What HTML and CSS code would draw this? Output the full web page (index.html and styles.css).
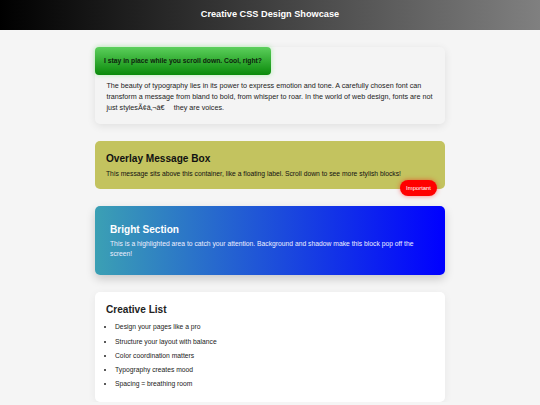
FILE: index.html
```html
<!DOCTYPE html>
<html lang="en">
<head>
<meta charset="utf-8">
<title>Creative CSS Design Showcase</title>
<link rel="stylesheet" href="styles.css">
</head>
<body>
<header class="site-header">
  <h1 class="site-title">Creative CSS Design Showcase</h1>
</header>
<main class="container">
  <section class="card intro">
    <div class="sticky-note">I stay in place while you scroll down. Cool, right?</div>
    <p class="intro-text">The beauty of typography lies in its power to express emotion and tone. A carefully chosen font can transform a message from bland to bold, from whisper to roar. In the world of web design, fonts are not just stylesÃ¢â‚¬â€&#8195; they are voices.</p>
  </section>
  <section class="card overlay">
    <h2 class="card-title">Overlay Message Box</h2>
    <p class="card-text">This message sits above this container, like a floating label. Scroll down to see more stylish blocks!</p>
    <span class="badge">Important</span>
  </section>
  <section class="card bright">
    <h2 class="card-title">Bright Section</h2>
    <p class="card-text">This is a highlighted area to catch your attention. Background and shadow make this block pop off the screen!</p>
  </section>
  <section class="card list-card">
    <h2 class="card-title">Creative List</h2>
    <ul class="creative-list">
      <li>Design your pages like a pro</li>
      <li>Structure your layout with balance</li>
      <li>Color coordination matters</li>
      <li>Typography creates mood</li>
      <li>Spacing = breathing room</li>
    </ul>
  </section>
</main>
</body>
</html>
```
FILE: styles.css
```css
* { box-sizing: border-box; }

html, body {
  margin: 0;
  padding: 0;
}

body {
  background: #f5f5f5;
  font-family: "Liberation Sans", Arial, sans-serif;
  font-size: 6.75px;
  color: #222;
}

.site-header {
  height: 30px;
  background: linear-gradient(to right, #000000, #808080);
  display: flex;
  align-items: center;
  justify-content: center;
}

.site-title {
  margin: 0;
  color: #fff;
  font-size: 9.2px;
  font-weight: bold;
  line-height: 1;
}

.container {
  width: 350px;
  margin: 17px auto 0;
  display: flex;
  flex-direction: column;
  gap: 17px;
}

.card {
  border-radius: 5px;
  position: relative;
}

.card-title {
  margin: 0;
  font-size: 10.1px;
  font-weight: bold;
  line-height: 12px;
}

.card-text {
  margin: 0;
}

/* intro card */
.intro {
  background: #f4f4f4;
  box-shadow: 0 2px 8px rgba(0, 0, 0, 0.09);
  padding-bottom: 10.4px;
}

.sticky-note {
  width: fit-content;
  height: 27.6px;
  line-height: 27.6px;
  padding: 0 9px;
  border-radius: 4px;
  background: linear-gradient(to bottom, #5ccf5c, #0a8a0a);
  box-shadow: 0 0 5px rgba(90, 230, 90, 0.45);
  color: #0c1f0c;
  font-weight: bold;
  font-size: 6.75px;
}

.intro-text {
  margin: 5px 5px 0 11.4px;
  font-size: 7.2px;
  line-height: 11.3px;
  color: #222;
}

/* overlay card */
.overlay {
  background: #c3c35f;
  padding: 12.5px 11px 10px;
  color: #111;
}

.overlay .card-text {
  margin-top: 2.4px;
  line-height: 11.3px;
}

.badge {
  position: absolute;
  right: 8px;
  bottom: -7px;
  height: 16px;
  line-height: 16px;
  padding: 0 6px;
  border-radius: 8px;
  background: #ff0000;
  color: #fff;
  font-size: 5.9px;
  box-shadow: 0 0 5px rgba(255, 0, 0, 0.5);
}

/* bright card */
.bright {
  background: linear-gradient(to right, #3ba0b4, #0000ff);
  color: #fff;
  padding: 18px 15px 15px;
  box-shadow: 0 4px 10px rgba(0, 0, 0, 0.18);
}

.bright .card-text {
  margin-top: 2.7px;
  line-height: 10.6px;
  color: #eef;
}

/* list card */
.list-card {
  background: #fff;
  padding: 12.5px 11px 8.5px;
  box-shadow: 0 2px 8px rgba(0, 0, 0, 0.06);
}

.creative-list {
  margin: 5.8px 0 0;
  padding-left: 9px;
  line-height: 10.8px;
}

.creative-list li {
  margin-bottom: 3.5px;
}
```
